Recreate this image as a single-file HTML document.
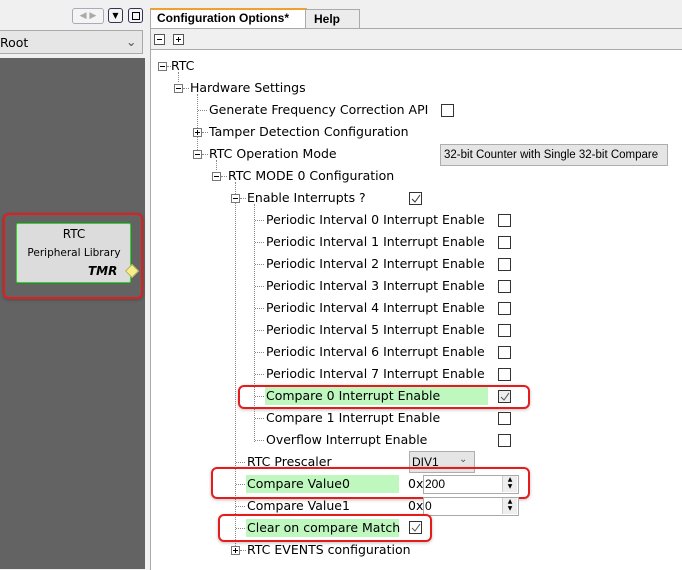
<html><head><style>
body{margin:0;width:682px;height:569px;overflow:hidden;background:#f0f0f0;font-family:"DejaVu Sans","Liberation Sans",sans-serif;font-size:12.5px;color:#000;position:relative}
.a{position:absolute}
.t{position:absolute;white-space:nowrap;line-height:16px}
.cb{position:absolute;width:11px;height:11px;border:1px solid #333;background:#fff}
.cb svg{position:absolute;left:1px;top:1px}
.bx{position:absolute;width:7px;height:7px;border:1px solid #777;background:#fff}
.bx:before{content:"";position:absolute;left:1px;top:3px;width:5px;height:1px;background:#000}
.bx.p:after{content:"";position:absolute;left:3px;top:1px;width:1px;height:5px;background:#000}
.hl{position:absolute;border-top:1px dotted #888;width:9px}
.vl{position:absolute;border-left:1px dotted #888}
.g{position:absolute;background:#bff8bf;height:18px}
.red{position:absolute;border:2px solid #e51c1c;border-radius:6px;box-shadow:0 1px 3px rgba(0,0,0,.25)}
.ls{font-family:"Liberation Sans",sans-serif}
</style></head><body>
<div class="a" style="left:0;top:0;width:145px;height:30px;background:#f0f0f0"></div>
<div class="a" style="left:72px;top:8px;width:30px;height:14px;border:1px solid #aab;border-radius:3px;background:#f4f4f4;color:#aaa;font-size:9px;line-height:14px;text-align:center">◀ ▶</div>
<div class="a" style="left:108px;top:8px;width:13px;height:13px;border:1px solid #335;border-radius:3px;background:#f4f4f4;font-size:8px;line-height:13px;text-align:center">▼</div>
<div class="a" style="left:128px;top:8px;width:13px;height:13px;border:1px solid #335;border-radius:3px;background:#f4f4f4"><div class="a" style="left:3px;top:3px;width:6px;height:6px;border:1px solid #000"></div></div>
<div class="a" style="left:0;top:30px;width:142px;height:22px;border:1px solid #aaa;border-left:none;background:#e6e6e6"></div>
<div class="t" style="left:0;top:35px">Root</div>
<div class="t" style="left:126px;top:34px;color:#555">⌄</div>
<div class="a" style="left:0;top:58px;width:145px;height:511px;background:#636363"></div>
<div class="a" style="left:145px;top:0;width:5px;height:569px;background:#f0f0f0"></div>
<div class="red" style="left:3px;top:213px;width:136px;height:82px"></div>
<div class="a" style="left:16px;top:223px;width:113px;height:58px;background:#dcdcdc;border:1.5px solid #22dd22;border-radius:2px"></div>
<div class="t" style="left:17px;top:226px;width:114px;text-align:center;font-size:12px">RTC</div>
<div class="t" style="left:17px;top:245px;width:114px;text-align:center;font-size:10.5px">Peripheral Library</div>
<div class="t" style="left:88px;top:263px;font-weight:bold;font-style:italic;font-size:12px">TMR</div>
<div class="a" style="left:127px;top:266px;width:8px;height:8px;background:#f7f08a;border:1px solid #b8b060;transform:rotate(45deg)"></div>

<div class="a" style="left:150px;top:8px;width:155px;height:20px;background:#fff;border:1px solid #aaa;border-top:2px solid #f0a030;border-bottom:none"></div>
<div class="t ls" style="left:157px;top:10px;font-weight:bold;font-size:12px">Configuration Options*</div>
<div class="a" style="left:305px;top:9px;width:53px;height:18px;background:#ececec;border:1px solid #aaa"></div>
<div class="t ls" style="left:314px;top:11px;font-weight:bold;font-size:12px">Help</div>
<div class="a" style="left:150px;top:28px;width:532px;height:541px;background:#f0f0f0;border-left:1px solid #aaa;border-top:1px solid #aaa"></div>
<div class="a" style="left:154px;top:34px;width:9px;height:9px;border:1px solid #555;background:#fff"><div class="a" style="left:2px;top:4px;width:5px;height:1px;background:#000"></div></div>
<div class="a" style="left:173px;top:34px;width:9px;height:9px;border:1px solid #555;background:#fff"><div class="a" style="left:2px;top:4px;width:5px;height:1px;background:#000"></div><div class="a" style="left:4px;top:2px;width:1px;height:5px;background:#000"></div></div>
<div class="a" style="left:151px;top:49px;width:531px;height:520px;background:#fff;border-top:1px solid #aaa"></div>

<div class="g" style="left:265px;top:387px;width:223px"></div>
<div class="g" style="left:246px;top:475px;width:153px"></div>
<div class="g" style="left:246px;top:519px;width:153px"></div>

<div class="vl" style="left:178px;top:72px;height:10px"></div>
<div class="vl" style="left:197px;top:94px;height:62px"></div>
<div class="vl" style="left:216px;top:160px;height:10px"></div>
<div class="vl" style="left:235px;top:182px;height:372px"></div>
<div class="vl" style="left:254px;top:204px;height:238px"></div>

<div class="bx" style="left:158px;top:62px"></div><div class="hl" style="left:167px;top:66px;width:4px"></div><div class="t" style="left:171px;top:58px">RTC</div>
<div class="bx" style="left:174px;top:84px"></div><div class="hl" style="left:183px;top:88px;width:6px"></div><div class="t" style="left:190px;top:80px">Hardware Settings</div>
<div class="hl" style="left:198px;top:110px"></div><div class="t" style="left:209px;top:102px">Generate Frequency Correction API</div>
<div class="cb" style="left:441px;top:104px"></div>
<div class="bx p" style="left:193px;top:128px"></div><div class="hl" style="left:202px;top:132px;width:6px"></div><div class="t" style="left:209px;top:124px">Tamper Detection Configuration</div>
<div class="bx" style="left:193px;top:150px"></div><div class="hl" style="left:202px;top:154px;width:6px"></div><div class="t" style="left:209px;top:146px">RTC Operation Mode</div>
<div class="a" style="left:440px;top:144px;width:226px;height:20px;background:#e5e5e5;border:1px solid #adadad"></div>
<div class="t ls" style="left:444px;top:147px;font-size:11.5px">32-bit Counter with Single 32-bit Compare</div>
<div class="t" style="left:651px;top:146px;color:#555;font-size:10px">⌄</div>
<div class="bx" style="left:212px;top:172px"></div><div class="hl" style="left:221px;top:176px;width:6px"></div><div class="t" style="left:228px;top:168px">RTC MODE 0 Configuration</div>
<div class="bx" style="left:231px;top:194px"></div><div class="hl" style="left:240px;top:198px;width:6px"></div><div class="t" style="left:247px;top:190px">Enable Interrupts ?</div>
<div class="cb" style="left:409px;top:192px"><svg width="10" height="10"><path d="M1 5 L4 8 L9 1" stroke="#333" fill="none"/></svg></div>

<div class="hl" style="left:255px;top:220px"></div><div class="t" style="left:266px;top:212px">Periodic Interval 0 Interrupt Enable</div><div class="cb" style="left:498px;top:214px"></div>
<div class="hl" style="left:255px;top:242px"></div><div class="t" style="left:266px;top:234px">Periodic Interval 1 Interrupt Enable</div><div class="cb" style="left:498px;top:236px"></div>
<div class="hl" style="left:255px;top:264px"></div><div class="t" style="left:266px;top:256px">Periodic Interval 2 Interrupt Enable</div><div class="cb" style="left:498px;top:258px"></div>
<div class="hl" style="left:255px;top:286px"></div><div class="t" style="left:266px;top:278px">Periodic Interval 3 Interrupt Enable</div><div class="cb" style="left:498px;top:280px"></div>
<div class="hl" style="left:255px;top:308px"></div><div class="t" style="left:266px;top:300px">Periodic Interval 4 Interrupt Enable</div><div class="cb" style="left:498px;top:302px"></div>
<div class="hl" style="left:255px;top:330px"></div><div class="t" style="left:266px;top:322px">Periodic Interval 5 Interrupt Enable</div><div class="cb" style="left:498px;top:324px"></div>
<div class="hl" style="left:255px;top:352px"></div><div class="t" style="left:266px;top:344px">Periodic Interval 6 Interrupt Enable</div><div class="cb" style="left:498px;top:346px"></div>
<div class="hl" style="left:255px;top:374px"></div><div class="t" style="left:266px;top:366px">Periodic Interval 7 Interrupt Enable</div><div class="cb" style="left:498px;top:368px"></div>
<div class="hl" style="left:255px;top:396px"></div><div class="t" style="left:266px;top:388px">Compare 0 Interrupt Enable</div><div class="cb" style="left:498px;top:390px;background:#eee"><svg width="10" height="10"><path d="M1 5 L4 8 L9 1" stroke="#555" fill="none"/></svg></div>
<div class="red" style="left:238px;top:385px;width:288px;height:20px"></div>
<div class="hl" style="left:255px;top:418px"></div><div class="t" style="left:266px;top:410px">Compare 1 Interrupt Enable</div><div class="cb" style="left:498px;top:412px"></div>
<div class="hl" style="left:255px;top:440px"></div><div class="t" style="left:266px;top:432px">Overflow Interrupt Enable</div><div class="cb" style="left:498px;top:434px"></div>

<div class="hl" style="left:236px;top:462px"></div><div class="t" style="left:247px;top:454px">RTC Prescaler</div>
<div class="a" style="left:409px;top:451px;width:64px;height:20px;background:#e5e5e5;border:1px solid #adadad"></div>
<div class="t ls" style="left:412px;top:454px;font-size:12px">DIV1</div><div class="t" style="left:459px;top:452px;color:#555;font-size:10px">⌄</div>

<div class="hl" style="left:236px;top:484px"></div><div class="t" style="left:247px;top:476px">Compare Value0</div>
<div class="t" style="left:408px;top:476px">0x</div>
<div class="a" style="left:423px;top:475px;width:94px;height:17px;background:#fff;border:1px solid #aaa"></div>
<div class="t ls" style="left:425px;top:476px;font-size:12px">200</div>
<div class="a" style="left:502px;top:476px;width:14px;height:16px;background:#eee;border-left:1px solid #ccc;font-size:6px;line-height:7px;text-align:center">▲<br>▼</div>
<div class="red" style="left:211px;top:467px;width:315px;height:28px"></div>

<div class="hl" style="left:236px;top:506px"></div><div class="t" style="left:247px;top:498px">Compare Value1</div>
<div class="t" style="left:408px;top:498px">0x</div>
<div class="a" style="left:423px;top:497px;width:94px;height:17px;background:#fff;border:1px solid #aaa"></div>
<div class="t ls" style="left:425px;top:498px;font-size:12px">0</div>
<div class="a" style="left:502px;top:498px;width:14px;height:16px;background:#eee;border-left:1px solid #ccc;font-size:6px;line-height:7px;text-align:center">▲<br>▼</div>

<div class="hl" style="left:236px;top:528px"></div><div class="t" style="left:247px;top:520px">Clear on compare Match</div>
<div class="cb" style="left:409px;top:521px"><svg width="10" height="10"><path d="M1 5 L4 8 L9 1" stroke="#555" fill="none"/></svg></div>
<div class="red" style="left:218px;top:514px;width:210px;height:24px"></div>

<div class="bx p" style="left:231px;top:546px"></div><div class="hl" style="left:240px;top:550px;width:6px"></div><div class="t" style="left:247px;top:542px">RTC EVENTS configuration</div>
</body></html>
